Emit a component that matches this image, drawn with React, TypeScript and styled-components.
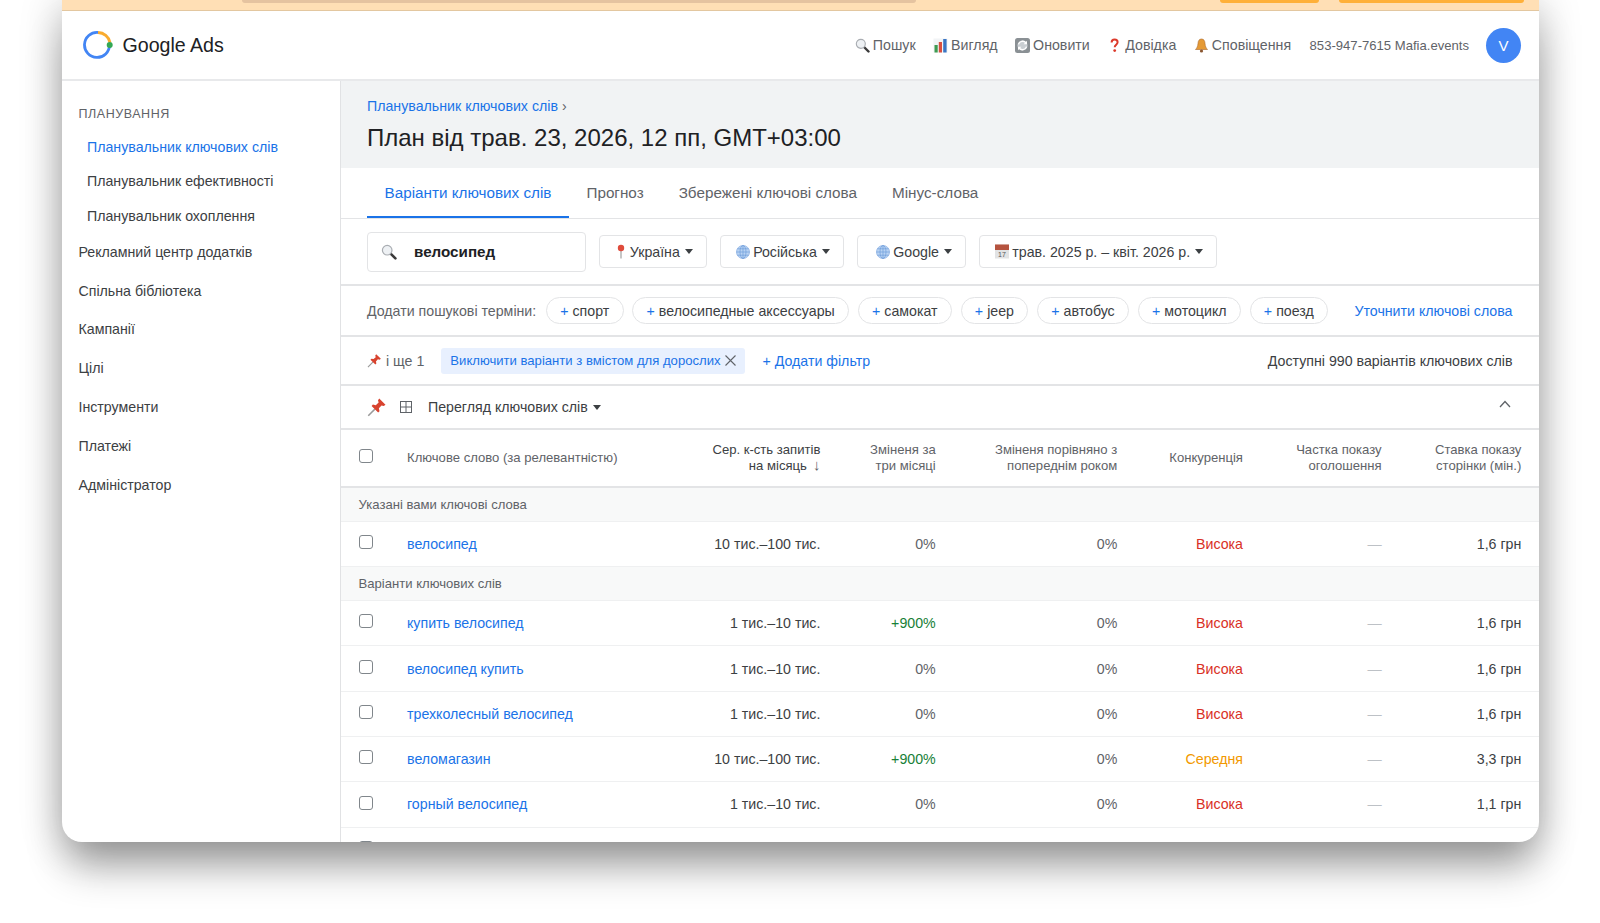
import React from 'react';
import styled, { createGlobalStyle } from 'styled-components';

const GlobalStyle = createGlobalStyle`
    html, body {
        margin: 0;
        height: 923px;
        overflow: hidden;
        background: #fff;
        font-family: "Liberation Sans", Arial, sans-serif;
        color: #202124;
    }
    * { box-sizing: border-box; }
`;

const BLUE = '#1a73e8';
const GRAY = '#5f6368';
const LINE = '#e3e4e6';

const Stage = styled.div`
    padding-left: 61.5px;
    height: 923px;
`;

const AppWindow = styled.div`
    width: 1477.5px;
    height: 842px;
    background: #fff;
    border-radius: 0 0 20px 20px;
    overflow: hidden;
    display: flex;
    flex-direction: column;
    box-shadow: 0 30px 40px -6px rgba(0, 0, 0, 0.32), 0 4px 40px 2px rgba(0, 0, 0, 0.22);
`;

const Banner = styled.div`
    flex: 0 0 11px;
    background: #ffdfb5;
    border-bottom: 1px solid #e3c7a0;
    display: flex;
    align-items: flex-start;
    padding: 0 15.5px 0 180px;
`;

const BannerInput = styled.div`
    width: 674px;
    height: 3px;
    background: #e5c3a0;
    border-radius: 0 0 8px 8px;
`;

const BannerButtons = styled.div`
    margin-left: auto;
    display: flex;
    gap: 20px;
`;

const BannerButton = styled.div<{ $w: number }>`
    width: ${({ $w }) => $w}px;
    height: 3px;
    background: #ffb038;
    border-radius: 0 0 8px 8px;
`;

const Header = styled.header`
    flex: 0 0 70px;
    display: flex;
    align-items: center;
    padding: 0 18px 0 21px;
    border-bottom: 2px solid #e8e9eb;
`;

const Brand = styled.div`
    display: flex;
    align-items: center;
    gap: 10px;
    font-size: 19.6px;
    color: #202124;
`;

const HeaderNav = styled.nav`
    margin-left: auto;
    display: flex;
    align-items: center;
    font-size: 14.2px;
    color: ${GRAY};
`;

const NavItem = styled.span`
    display: inline-flex;
    align-items: center;
    gap: 3px;
    margin-right: 17.5px;
    white-space: nowrap;
`;

const Account = styled.span`
    font-size: 13.1px;
    margin: 0 17px 0 1px;
    white-space: nowrap;
`;

const Avatar = styled.div`
    width: 35px;
    height: 35px;
    border-radius: 50%;
    background: #4285f4;
    color: #fff;
    font-size: 15px;
    display: flex;
    align-items: center;
    justify-content: center;
`;

const Body = styled.div`
    flex: 1;
    min-height: 0;
    display: flex;
`;

const Sidebar = styled.aside`
    flex: 0 0 279px;
    border-right: 1px solid #e1e2e4;
    padding: 26px 0 0 17px;
`;

const SideTitle = styled.div`
    font-size: 12.5px;
    letter-spacing: 0.55px;
    color: ${GRAY};
    line-height: 14px;
    margin-bottom: 9px;
`;

const SubItem = styled.div<{ $active?: boolean }>`
    font-size: 14.2px;
    line-height: 34.3px;
    padding-left: 8.5px;
    color: ${({ $active }) => ($active ? BLUE : '#3c4043')};
`;

const SideItem = styled.div`
    font-size: 14.2px;
    line-height: 38.8px;
    color: #3c4043;
`;

const Main = styled.main`
    flex: 1;
    min-width: 0;
    display: flex;
    flex-direction: column;
`;

const PageHead = styled.div`
    flex: 0 0 87px;
    background: #f1f3f4;
    padding: 17px 26.5px 0;
`;

const Crumb = styled.div`
    font-size: 14.2px;
    line-height: 16px;
    color: ${GRAY};
    a { color: ${BLUE}; }
`;

const Title = styled.h1`
    margin: 8px 0 0;
    font-size: 24px;
    line-height: 32px;
    font-weight: 400;
    color: #202124;
`;

const Tabs = styled.div`
    flex: 0 0 50px;
    display: flex;
    padding-left: 26.5px;
    border-bottom: 1px solid ${LINE};
`;

const Tab = styled.div<{ $active?: boolean }>`
    height: 50px;
    padding: 0 17.5px;
    display: flex;
    align-items: center;
    font-size: 15.25px;
    color: ${({ $active }) => ($active ? BLUE : GRAY)};
    border-bottom: 2px solid ${({ $active }) => ($active ? BLUE : 'transparent')};
`;

const FilterBar = styled.div`
    flex: 0 0 67px;
    display: flex;
    align-items: center;
    padding-left: 26.5px;
    gap: 13.3px;
    border-bottom: 2px solid ${LINE};
`;

const SearchBox = styled.div`
    width: 218.5px;
    height: 40px;
    border: 1.5px solid #e3e4e6;
    border-radius: 4px;
    display: flex;
    align-items: center;
    gap: 17px;
    padding-left: 13px;
    font-size: 15.2px;
    font-weight: 700;
    color: #202124;
`;

const Dropdown = styled.div<{ $pl?: number }>`
    height: 33px;
    border: 1.5px solid #e3e4e6;
    border-radius: 4px;
    display: flex;
    align-items: center;
    gap: 3px;
    padding: 0 13px 0 ${({ $pl }) => $pl ?? 15}px;
    font-size: 14.2px;
    color: #3c4043;
    white-space: nowrap;
`;

const Caret = styled.span`
    display: inline-block;
    width: 0;
    height: 0;
    margin-left: 2px;
    border-left: 4.5px solid transparent;
    border-right: 4.5px solid transparent;
    border-top: 5px solid #3c4043;
`;

const SuggestRow = styled.div`
    flex: 0 0 51px;
    display: flex;
    align-items: center;
    padding: 0 26.5px;
    gap: 8.7px;
    font-size: 14.2px;
    border-bottom: 2px solid ${LINE};
`;

const SuggestLabel = styled.span`
    color: ${GRAY};
    white-space: nowrap;
    margin-right: 1px;
`;

const Chip = styled.span`
    height: 27.5px;
    padding: 0 13.3px;
    border: 1.5px solid #e3e4e6;
    border-radius: 14px;
    display: inline-flex;
    align-items: center;
    gap: 4px;
    color: #3c4043;
    white-space: nowrap;
    b {
        font-weight: 400;
        color: ${BLUE};
    }
`;

const RefineLink = styled.a`
    margin-left: auto;
    color: ${BLUE};
    white-space: nowrap;
`;

const FilterRow = styled.div`
    flex: 0 0 49px;
    display: flex;
    align-items: center;
    padding: 0 26.5px;
    font-size: 14.2px;
    border-bottom: 2px solid ${LINE};
`;

const PinnedCount = styled.span`
    display: inline-flex;
    align-items: center;
    gap: 4px;
    color: ${GRAY};
    margin-right: 17px;
`;

const FilterTag = styled.span`
    height: 26px;
    padding: 0 9px;
    background: #e8f0fe;
    border-radius: 3px;
    display: inline-flex;
    align-items: center;
    gap: 4px;
    font-size: 13.1px;
    color: ${BLUE};
    white-space: nowrap;
`;

const AddFilter = styled.a`
    margin-left: 18px;
    color: ${BLUE};
`;

const Available = styled.span`
    margin-left: auto;
    color: #3c4043;
`;

const Toolbar = styled.div`
    flex: 0 0 44px;
    display: flex;
    align-items: center;
    padding: 0 26.5px;
    font-size: 14.2px;
    color: #3c4043;
    border-bottom: 2px solid ${LINE};
`;

const GridSwitch = styled.span`
    display: inline-flex;
    margin-left: 13px;
`;

const ViewSwitch = styled.span`
    display: inline-flex;
    align-items: center;
    gap: 3px;
    margin-left: 16px;
`;

const Collapse = styled.span`
    margin-left: auto;
    display: flex;
    margin-top: -6px;
    margin-right: 2px;
`;

const Table = styled.div`
    flex: 1;
    min-height: 0;
    overflow: hidden;
`;

const Cols = `
    display: grid;
    grid-template-columns: 48.500px 289.500px 123.900px 115.300px 181.600px 125.700px 138.600px 139.800px;
    padding-left: 18px;
    align-items: center;
`;

const HeadRow = styled.div`
    ${Cols}
    height: 58px;
    font-size: 13.1px;
    line-height: 16px;
    color: ${GRAY};
    border-bottom: 2px solid ${LINE};
`;

const HeadCell = styled.div<{ $dark?: boolean }>`
    text-align: right;
    white-space: nowrap;
    color: ${({ $dark }) => ($dark ? '#3c4043' : GRAY)};
`;

const KeywordHead = styled.div`
    white-space: nowrap;
`;

const SortArrow = styled.span`
    display: inline-block;
    margin-left: 6px;
    font-size: 15px;
    line-height: 0;
    color: ${GRAY};
`;

const SectionRow = styled.div<{ $h: number }>`
    height: ${({ $h }) => $h}px;
    display: flex;
    align-items: center;
    padding-left: 18px;
    font-size: 13.1px;
    color: ${GRAY};
    background: #f8f9f9;
    border-bottom: 1px solid #eff0f1;
`;

const Row = styled.div`
    ${Cols}
    height: 45.3px;
    font-size: 14.2px;
    color: #3c4043;
    border-bottom: 1px solid #eff0f1;
`;

const Checkbox = styled.span`
    display: block;
    width: 14px;
    height: 14px;
    margin-top: -3.5px;
    border: 1.5px solid #80868b;
    border-radius: 3px;
    background: #fff;
`;

const Keyword = styled.a`
    color: ${BLUE};
    white-space: nowrap;
`;

const Num = styled.div<{ $color?: string }>`
    text-align: right;
    white-space: nowrap;
    color: ${({ $color }) => $color || '#3c4043'};
`;

const LensIcon = ({ size = 15 }: { size?: number }) => (
    <svg width={size} height={size} viewBox="0 0 16 16">
        <line x1="9.6" y1="9.6" x2="14.4" y2="14.4" stroke="#3a3a3a" strokeWidth="2.6" strokeLinecap="round" />
        <circle cx="6.2" cy="6.2" r="4.8" fill="#eef1f4" stroke="#a9adb2" strokeWidth="1.2" />
    </svg>
);

const ChartIcon = () => (
    <svg width="15" height="15" viewBox="0 0 15 15">
        <rect x="0.5" y="0.5" width="14" height="14" fill="#f2f4f6" />
        <rect x="1.5" y="7" width="3.2" height="7.5" fill="#3f9b52" />
        <rect x="5.8" y="4" width="3.2" height="10.5" fill="#d9503f" />
        <rect x="10.2" y="1" width="3.4" height="13.5" fill="#3a76c4" />
    </svg>
);

const RefreshIcon = () => (
    <svg width="15" height="15" viewBox="0 0 15 15" fill="none">
        <rect width="15" height="15" rx="2.5" fill="#8a9094" />
        <circle cx="7.5" cy="7.500" r="5" fill="#c9ced2" />
        <path d="M3.400 6.400a4.300 4.300 0 0 1 7.600-1.400" stroke="#fff" strokeWidth="1.4" />
        <path d="M11.600 8.600a4.300 4.300 0 0 1-7.600 1.400" stroke="#fff" strokeWidth="1.4" />
        <path d="M12 2.800v3.400H8.600z" fill="#fff" />
        <path d="M3 12.200V8.800h3.400z" fill="#fff" />
    </svg>
);

const QuestionIcon = () => (
    <svg width="15" height="15" viewBox="0 0 15 15" fill="none">
        <path d="M4.6 4.6c0-1.9 1.3-3 3-3s3 1 3 2.7c0 2.4-2.9 2.5-2.9 5" stroke="#dc3a2c" strokeWidth="2" />
        <circle cx="7.7" cy="12.6" r="1.4" fill="#dc3a2c" />
    </svg>
);

const BellIcon = () => (
    <svg width="15" height="15" viewBox="0 0 15 15">
        <path d="M7.5 1C5 1 4.2 3 4 5.4 3.800 8.500 2.900 10 1.500 11.500h12C12.100 10 11.200 8.500 11 5.400 10.800 3 10 1 7.500 1z" fill="#e59a35" stroke="#a9662a" strokeWidth="0.6" />
        <circle cx="7.5" cy="13" r="1.6" fill="#8a5630" />
    </svg>
);

const MapPinIcon = () => (
    <svg width="12" height="15" viewBox="0 0 12 15">
        <line x1="6" y1="6" x2="6" y2="14.500" stroke="#a8a8a8" strokeWidth="1.3" />
        <circle cx="6" cy="4" r="3.200" fill="#df4b3c" />
    </svg>
);

const GlobeIcon = () => (
    <svg width="14" height="14" viewBox="0 0 14 14" fill="none">
        <circle cx="7" cy="7" r="6.500" fill="#b9d3f3" stroke="#8fb3e3" strokeWidth="0.8" />
        <ellipse cx="7" cy="7" rx="3" ry="6.500" stroke="#6f9ddb" strokeWidth="0.7" />
        <path d="M7 .5v13M.5 7h13M1.400 3.800h11.200M1.400 10.200h11.200" stroke="#6f9ddb" strokeWidth="0.7" />
    </svg>
);

const CalendarIcon = () => (
    <svg width="14" height="15" viewBox="0 0 14 15">
        <rect y="0.500" width="14" height="14" fill="#e2e3e4" />
        <rect y="0.500" width="14" height="5.500" fill="#b5533f" />
        <text x="7" y="13.300" fontSize="7" textAnchor="middle" fill="#555" fontFamily="Liberation Sans">17</text>
    </svg>
);

const PushPinIcon = ({ size = 15 }: { size?: number }) => (
    <svg width={size} height={size} viewBox="0 0 16 16">
        <line x1="1" y1="15" x2="6.500" y2="9.500" stroke="#9a9a9a" strokeWidth="1.200" />
        <path d="M9.800 1.200 14.800 6.200 13.400 7.200 11.600 6.700 9.500 9 10 11.300 8.900 12.300 3.700 7.100 4.700 6 7 6.500 9.300 4.400 8.800 2.600z" fill="#d8432f" />
    </svg>
);

const GridIcon = () => (
    <svg width="12" height="12" viewBox="0 0 12 12" fill="none" stroke="#5f6368" strokeWidth="1">
        <rect x="0.500" y="0.500" width="11" height="11" />
        <path d="M6 .5v11M.5 6h11" />
    </svg>
);

const ChevronUp = () => (
    <svg width="12" height="8" viewBox="0 0 12 8" fill="none" stroke="#5f6368" strokeWidth="1.300">
        <path d="M1 7l5-5.500L11 7" />
    </svg>
);

const CloseIcon = () => (
    <svg width="11" height="11" viewBox="0 0 11 11" stroke="#5f6368" strokeWidth="1.100">
        <path d="M.5.500l10 10M10.500.500l-10 10" />
    </svg>
);

const Logo = () => (
    <svg width="30" height="30" viewBox="0 0 30 30" fill="none">
        <path d="M26.500 15A12.500 12.500 0 1 1 15 2.500" stroke="#4285f4" strokeWidth="2.800" />
        <path d="M15 2.500A12.500 12.500 0 0 1 27 12.500" stroke="#f9ab2e" strokeWidth="2.800" />
        <circle cx="26.700" cy="15" r="3" fill="#34a853" />
    </svg>
);

const suggestions = ['спорт', 'велосипедные аксессуары', 'самокат', 'jeep', 'автобус', 'мотоцикл', 'поезд'];
const planningItems = ['Планувальник ефективності', 'Планувальник охоплення'];
const sideItems = ['Рекламний центр додатків', 'Спільна бібліотека', 'Кампанії', 'Цілі', 'Інструменти', 'Платежі', 'Адміністратор'];

interface KeywordRow {
    keyword: string;
    volume: string;
    change: string;
    competition: 'Висока' | 'Середня';
    bid: string;
}

const ideas: KeywordRow[] = [
    { keyword: 'купить велосипед', volume: '1 тис.–10 тис.', change: '+900%', competition: 'Висока', bid: '1,6 грн' },
    { keyword: 'велосипед купить', volume: '1 тис.–10 тис.', change: '0%', competition: 'Висока', bid: '1,6 грн' },
    { keyword: 'трехколесный велосипед', volume: '1 тис.–10 тис.', change: '0%', competition: 'Висока', bid: '1,6 грн' },
    { keyword: 'веломагазин', volume: '10 тис.–100 тис.', change: '+900%', competition: 'Середня', bid: '3,3 грн' },
    { keyword: 'горный велосипед', volume: '1 тис.–10 тис.', change: '0%', competition: 'Висока', bid: '1,1 грн' },
];

const KeywordTableRow = ({ row }: { row: KeywordRow }) => (
    <Row>
        <Checkbox />
        <Keyword>{row.keyword}</Keyword>
        <Num>{row.volume}</Num>
        <Num $color={row.change === '0%' ? GRAY : '#188038'}>{row.change}</Num>
        <Num $color={GRAY}>0%</Num>
        <Num $color={row.competition === 'Висока' ? '#d93025' : '#f29900'}>{row.competition}</Num>
        <Num $color="#bdc1c6">—</Num>
        <Num>{row.bid}</Num>
    </Row>
);

export default function App() {
    return (
        <Stage>
            <GlobalStyle />
            <AppWindow>
                <Banner>
                    <BannerInput />
                    <BannerButtons>
                        <BannerButton $w={99} />
                        <BannerButton $w={185} />
                    </BannerButtons>
                </Banner>
                <Header>
                    <Brand><Logo />Google Ads</Brand>
                    <HeaderNav>
                        <NavItem><LensIcon />Пошук</NavItem>
                        <NavItem><ChartIcon />Вигляд</NavItem>
                        <NavItem><RefreshIcon />Оновити</NavItem>
                        <NavItem><QuestionIcon />Довідка</NavItem>
                        <NavItem><BellIcon />Сповіщення</NavItem>
                        <Account>853-947-7615 Mafia.events</Account>
                        <Avatar>V</Avatar>
                    </HeaderNav>
                </Header>
                <Body>
                    <Sidebar>
                        <SideTitle>ПЛАНУВАННЯ</SideTitle>
                        <SubItem $active>Планувальник ключових слів</SubItem>
                        {planningItems.map(item => <SubItem key={item}>{item}</SubItem>)}
                        {sideItems.map(item => <SideItem key={item}>{item}</SideItem>)}
                    </Sidebar>
                    <Main>
                        <PageHead>
                            <Crumb><a>Планувальник ключових слів</a> ›</Crumb>
                            <Title>План від трав. 23, 2026, 12 пп, GMT+03:00</Title>
                        </PageHead>
                        <Tabs>
                            <Tab $active>Варіанти ключових слів</Tab>
                            <Tab>Прогноз</Tab>
                            <Tab>Збережені ключові слова</Tab>
                            <Tab>Мінус-слова</Tab>
                        </Tabs>
                        <FilterBar>
                            <SearchBox><LensIcon size={16} />велосипед</SearchBox>
                            <Dropdown><MapPinIcon />Україна<Caret /></Dropdown>
                            <Dropdown><GlobeIcon />Російська<Caret /></Dropdown>
                            <Dropdown $pl={18}><GlobeIcon />Google<Caret /></Dropdown>
                            <Dropdown><CalendarIcon />трав. 2025 р. – квіт. 2026 р.<Caret /></Dropdown>
                        </FilterBar>
                        <SuggestRow>
                            <SuggestLabel>Додати пошукові терміни:</SuggestLabel>
                            {suggestions.map(term => <Chip key={term}><b>+</b>{term}</Chip>)}
                            <RefineLink>Уточнити ключові слова</RefineLink>
                        </SuggestRow>
                        <FilterRow>
                            <PinnedCount><PushPinIcon />і ще 1</PinnedCount>
                            <FilterTag>Виключити варіанти з вмістом для дорослих<CloseIcon /></FilterTag>
                            <AddFilter>+ Додати фільтр</AddFilter>
                            <Available>Доступні 990 варіантів ключових слів</Available>
                        </FilterRow>
                        <Toolbar>
                            <PushPinIcon size={20} />
                            <GridSwitch><GridIcon /></GridSwitch>
                            <ViewSwitch>Перегляд ключових слів<Caret /></ViewSwitch>
                            <Collapse><ChevronUp /></Collapse>
                        </Toolbar>
                        <Table>
                            <HeadRow>
                                <Checkbox />
                                <KeywordHead>Ключове слово (за релевантністю)</KeywordHead>
                                <HeadCell $dark>Сер. к-сть запитів<br />на місяць<SortArrow>↓</SortArrow></HeadCell>
                                <HeadCell>Зміненя за<br />три місяці</HeadCell>
                                <HeadCell>Зміненя порівняно з<br />попереднім роком</HeadCell>
                                <HeadCell>Конкуренція</HeadCell>
                                <HeadCell>Частка показу<br />оголошення</HeadCell>
                                <HeadCell>Ставка показу<br />сторінки (мін.)</HeadCell>
                            </HeadRow>
                            <SectionRow $h={34}>Указані вами ключові слова</SectionRow>
                            <KeywordTableRow row={{ keyword: 'велосипед', volume: '10 тис.–100 тис.', change: '0%', competition: 'Висока', bid: '1,6 грн' }} />
                            <SectionRow $h={33.8}>Варіанти ключових слів</SectionRow>
                            {ideas.map(row => <KeywordTableRow key={row.keyword} row={row} />)}
                            <Row><Checkbox /></Row>
                        </Table>
                    </Main>
                </Body>
            </AppWindow>
        </Stage>
    );
}
